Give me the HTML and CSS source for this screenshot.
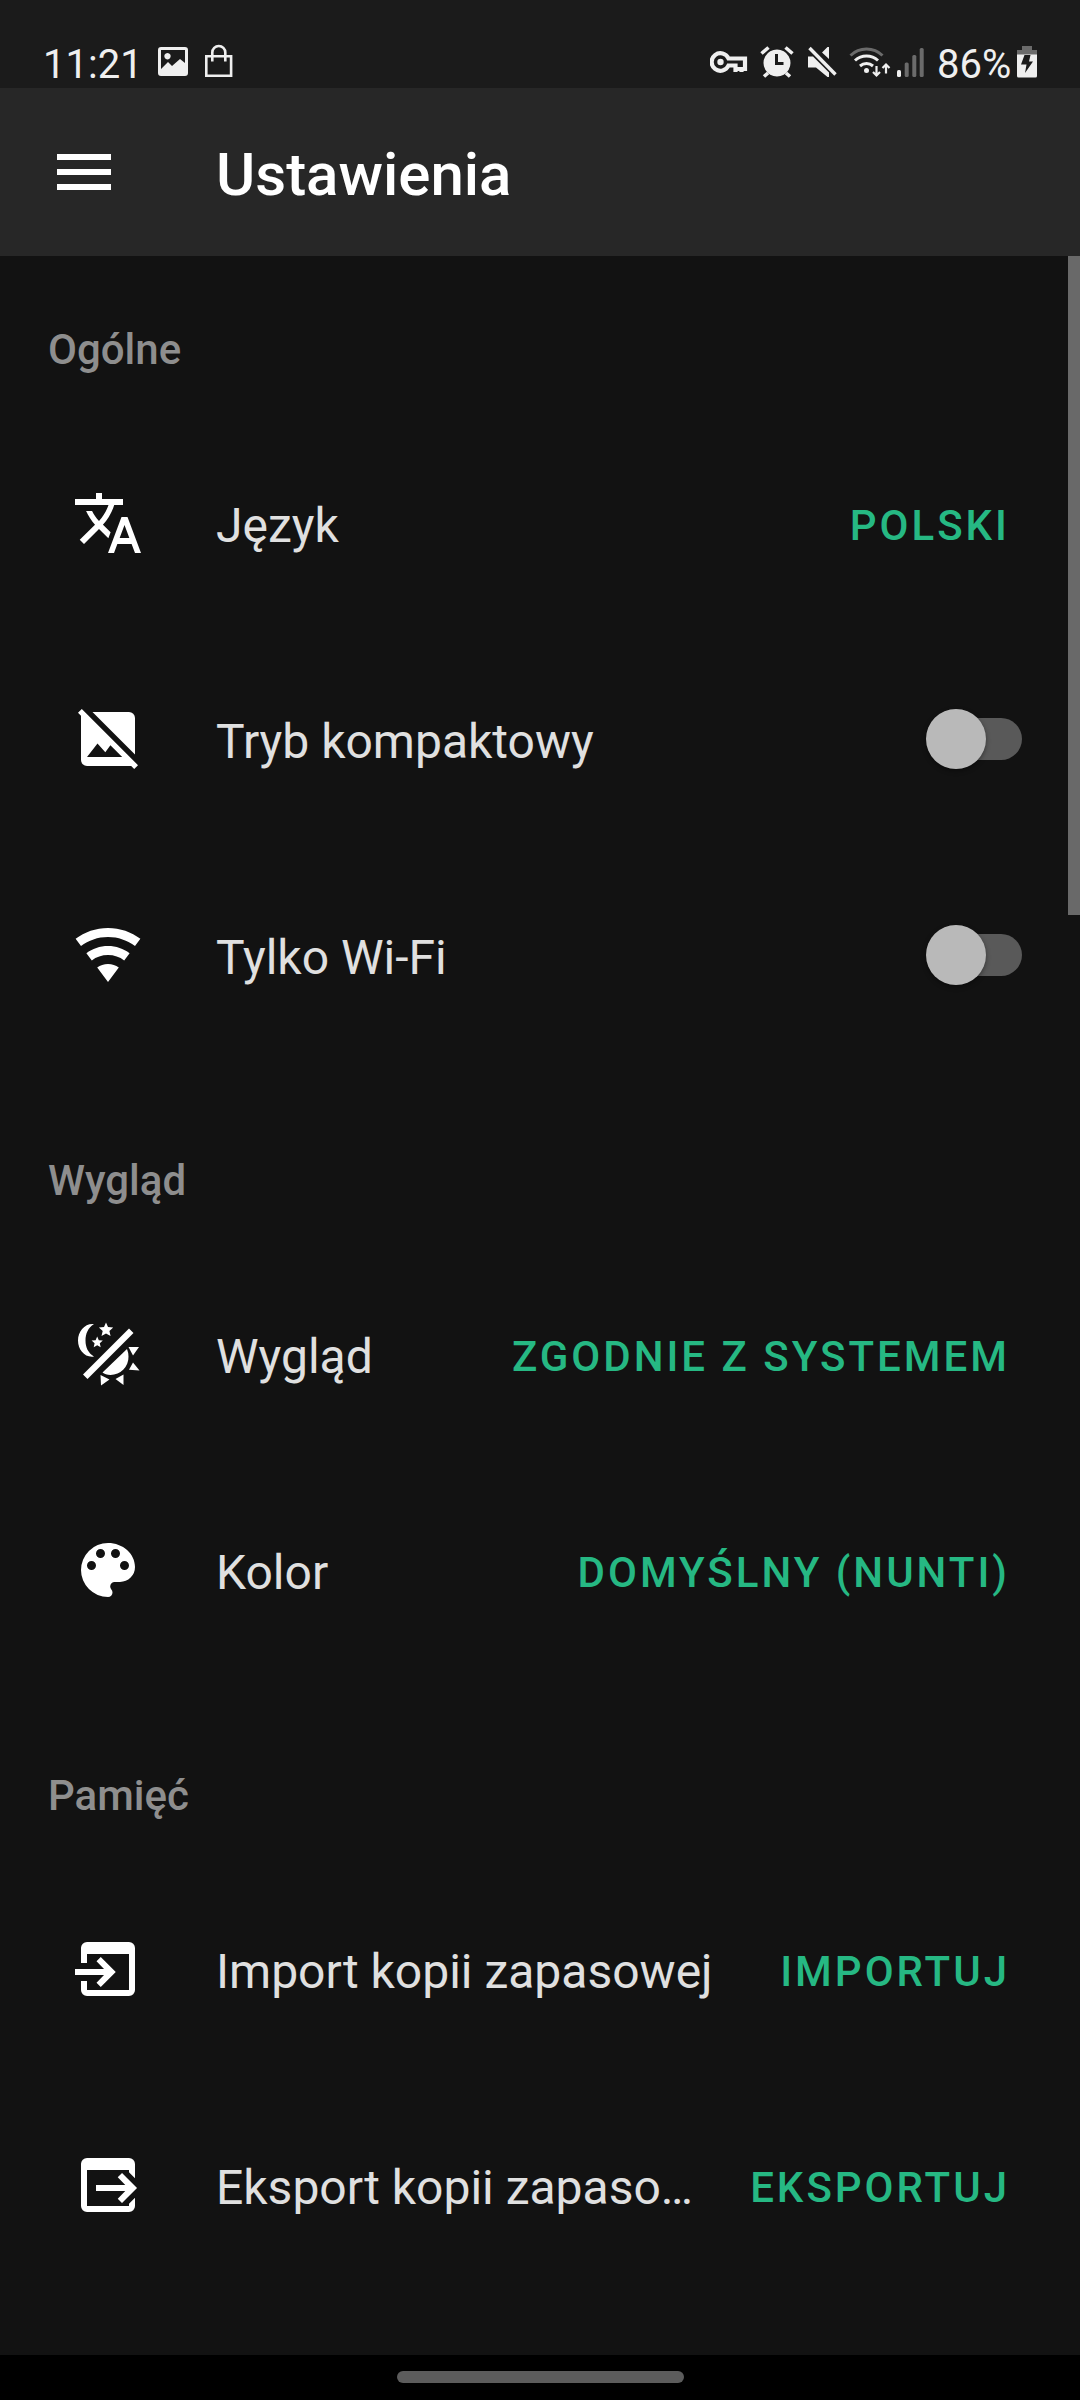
FILE: index.html
```html
<!DOCTYPE html>
<html lang="pl">
<head>
<meta charset="utf-8">
<title>Ustawienia</title>
<link rel="stylesheet" href="styles.css">
</head>
<body>
<div class="screen">
  <div class="status">
    <span class="clock">11:21</span>
    <svg class="st-image" width="30" height="30" viewBox="0 0 30 30"><path fill-rule="evenodd" d="M3 0h24a3 3 0 0 1 3 3v23a3 3 0 0 1-3 3H3a3 3 0 0 1-3-3V3a3 3 0 0 1 3-3zM3 3v19l7-7 4 4 8-7 5 4V3zM9.500 6a3.200 3.200 0 1 1-.01 0z"/></svg>
    <svg class="st-bag" width="30" height="34" viewBox="0 0 30 34"><path fill="none" stroke="#efefef" stroke-width="2.600" d="M2.300 12.300h24.800v19.400H2.300zM8.300 17.500V8.500a6.500 6.500 0 0 1 13 0v9"/></svg>
    <span class="gap"></span>
    <svg class="st-key" width="38" height="24" viewBox="0 0 38 24"><path fill="none" stroke="#efefef" stroke-width="4.200" d="M18.500 8.500H35v10.500h-3.500V22v-3h-6v3-6.500h-7A8.800 8.800 0 1 1 18.500 8.500z"/><circle cx="10.500" cy="12" r="3.200"/></svg>
    <svg class="st-alarm" width="34" height="32" viewBox="0 0 34 32"><path fill-rule="evenodd" d="M17 3.500a13.500 13.500 0 1 1-.01 0zM15 8v11h8.500v-3H18V8z"/><path fill="none" stroke="#efefef" stroke-width="3.600" d="M1.500 7.500 8.500 1.500M32.500 7.500l-7-6M8 27l-4 3.500M26 27l4 3.500"/></svg>
    <svg class="st-mute" width="30" height="32" viewBox="0 0 30 32"><path d="M0 10.500h5L21 26.500V31h-1.500L8 21.500H0zM21 1v12l-7-6.500L19.500 1z"/><path fill="none" stroke="#efefef" stroke-width="3.400" d="M1.500 2 27.500 28.500"/></svg>
    <svg class="st-wifi" width="42" height="32" viewBox="0 0 42 32"><g fill="none" stroke="#efefef" stroke-width="3"><path stroke="#6b6b6b" d="M1.500 9.500a23 23 0 0 1 32 0"/><path d="M6 14.500a17 17 0 0 1 23 0M11 20a10 10 0 0 1 13 0"/><path stroke-width="2.200" d="M27.500 20v9M24 26l3.500 3.500L31 26M37 27.500v-9M33.500 22l3.500-3.500 3.500 3.500"/></g><circle cx="17.500" cy="24.500" r="2.500"/></svg>
    <svg class="st-signal" width="27" height="30" viewBox="0 0 27 30"><rect x="0" y="22" width="4" height="7" rx="1.500"/><g fill="#6b6b6b"><rect x="7.700" y="14.500" width="4" height="14.500" rx="1.500"/><rect x="15.300" y="7" width="4" height="22" rx="1.500"/><rect x="22.700" y="0" width="4" height="29" rx="1.500"/></g></svg>
    <span class="percent">86%</span>
    <svg class="st-batt" width="20" height="32" viewBox="0 0 20 32"><path fill="#6b6b6b" d="M5 0h10v4h5v5H0V4h5z"/><path d="M0 8.500h20V30a1.500 1.500 0 0 1-1.500 1.500h-17A1.500 1.500 0 0 1 0 30z"/><path fill="#1b1b1b" d="M7.500 9h6L12 15.500h4L8 27l1.500-8.500H4z"/></svg>
  </div>
  <header class="appbar">
    <svg class="icon" viewBox="0 0 24 24"><path d="M3 6h18v2H3V6m0 5h18v2H3v-2m0 5h18v2H3v-2z"/></svg>
    <h1>Ustawienia</h1>
  </header>
  <main class="list">
    <div class="scrollbar"></div>
    <h2>Ogólne</h2>
    <div class="row">
      <svg class="icon" viewBox="0 0 24 24"><path d="M12.870 15.070l-2.540-2.510.03-.03A17.520 17.520 0 0 0 14.070 6H17V4h-7V2H8v2H1v2h11.170C11.500 7.920 10.440 9.750 9 11.350 8.070 10.320 7.300 9.190 6.690 8h-2c.73 1.630 1.730 3.170 2.980 4.560l-5.090 5.020L4 19l5-5 3.110 3.110.76-2.040M18.500 10h-2L12 22h2l1.120-3h4.750L21 22h2l-4.500-12m-2.620 7l1.620-4.330L19.120 17h-3.240z"/></svg>
      <span class="label">Język</span><button>Polski</button>
    </div>
    <div class="row">
      <svg class="icon" viewBox="0 0 24 24"><path fill-rule="evenodd" d="M22 20.730L3.270 2 2 3.270l1 1V19a2 2 0 0 0 2 2h14.730l1 1L22 20.730zM6.830 3L21 17.170V5a2 2 0 0 0-2-2H6.830zM5 18l3.500-4.500 2.600 2.900 1.700-2.330L16.730 18H5z"/></svg>
      <span class="label">Tryb kompaktowy</span><span class="switch"></span>
    </div>
    <div class="row">
      <svg class="icon" viewBox="0 0 24 24"><path d="M12 21l3.600-4.800c-1-.75-2.250-1.200-3.600-1.200s-2.600.45-3.600 1.200L12 21m0-18C7.950 3 4.210 4.340 1.200 6.600L3 9c2.500-1.880 5.620-3 9-3s6.500 1.120 9 3l1.800-2.400C19.790 4.340 16.050 3 12 3m0 6c-2.700 0-5.190.89-7.200 2.400l1.800 2.400c1.500-1.130 3.370-1.800 5.400-1.800s3.900.67 5.400 1.800l1.800-2.400C17.190 9.890 14.700 9 12 9z"/></svg>
      <span class="label">Tylko Wi-Fi</span><span class="switch"></span>
    </div>
    <h2>Wygląd</h2>
    <div class="row">
      <svg class="icon" viewBox="0 -2 72 72"><path d="M22 4C13 3 6 11 6 20.500S13 38 22 36.500C16 33 13.500 27 13.500 20.500S16 7.500 22 4zM34 2.500l2 4.500 5.200.4-3.800 3.600 1.200 5-4.600-2.500-4.500 2.500 1.200-5-3.800-3.600 5.100-.4zM25.200 16.500l1.600 3.700 4 .3-3 2.800.9 4-3.500-2-3.500 2 .9-4-3-2.800 4-.3zM57 8.500l4.500 4.500L15.500 59 11 54.500zM55 29a20 20 0 0 1 1.500 7.500A18 18 0 0 1 38.500 55c-3.500 0-6-1-8-2.500zM56.500 27h10.500l-6 8.500zM61 42.500l6.500 8L57 49.800zM28.500 55l9 4.500-8.500 6zM51.500 54.500v10.500l-8-6z"/></svg>
      <span class="label">Wygląd</span><button>Zgodnie z systemem</button>
    </div>
    <div class="row">
      <svg class="icon" viewBox="0 0 24 24"><path d="M17.500 12a1.500 1.500 0 0 1-1.500-1.500A1.500 1.500 0 0 1 17.500 9a1.500 1.500 0 0 1 1.500 1.500 1.500 1.500 0 0 1-1.500 1.500m-3-4A1.500 1.500 0 0 1 13 6.500 1.500 1.500 0 0 1 14.500 5 1.500 1.500 0 0 1 16 6.500 1.500 1.500 0 0 1 14.500 8m-5 0A1.500 1.500 0 0 1 8 6.500 1.500 1.500 0 0 1 9.500 5 1.500 1.500 0 0 1 11 6.500 1.500 1.500 0 0 1 9.500 8m-3 4A1.500 1.500 0 0 1 5 10.500 1.500 1.500 0 0 1 6.500 9 1.500 1.500 0 0 1 8 10.500 1.500 1.500 0 0 1 6.500 12M12 3a9 9 0 0 0-9 9 9 9 0 0 0 9 9 1.500 1.500 0 0 0 1.500-1.500c0-.39-.15-.74-.39-1-.23-.27-.38-.62-.38-1a1.500 1.500 0 0 1 1.500-1.500H16a5 5 0 0 0 5-5c0-4.420-4.030-8-9-8z"/></svg>
      <span class="label">Kolor</span><button>Domyślny (Nunti)</button>
    </div>
    <h2>Pamięć</h2>
    <div class="row">
      <svg class="icon" viewBox="0 0 24 24"><path d="M5 3h14a2 2 0 0 1 2 2v14a2 2 0 0 1-2 2H5a2 2 0 0 1-2-2v-3h2v3h14V7H5v3H3V5a2 2 0 0 1 2-2zM1 12v2h9.670l-2.500 2.590L9.590 18l5-5-5-5-1.420 1.410L10.670 12z"/></svg>
      <span class="label">Import kopii zapasowej</span><button>Importuj</button>
    </div>
    <div class="row">
      <svg class="icon" viewBox="0 0 24 24"><path d="M5 3h14a2 2 0 0 1 2 2v4.750l-2-2V7H5v12h14v-.75l2-2V19a2 2 0 0 1-2 2H5a2 2 0 0 1-2-2V5a2 2 0 0 1 2-2zM8 12v2h9.750l-2.500 2.590L16.670 18l5-5-5-5-1.420 1.410L17.750 12z"/></svg>
      <span class="label">Eksport kopii zapaso…</span><button>Eksportuj</button>
    </div>
  </main>
  <div class="navbar"><span class="pill"></span></div>
</div>
</body>
</html>
```
FILE: styles.css
```css
* { box-sizing: border-box; }
body { margin: 0; background: #121212; font-family: Roboto, sans-serif; color: #e0e0e0; }
.screen { width: 1080px; height: 2400px; display: flex; flex-direction: column; overflow: hidden; }
svg { display: block; flex: none; fill: #efefef; }
.status { height: 88px; background: #1b1b1b; display: flex; align-items: flex-start; padding: 0 43px; color: #efefef; flex: none; }
.clock, .percent { font-size: 40px; line-height: 48px; margin-top: 41px; white-space: nowrap; }
.clock { width: 115px; }
.percent { width: 80px; }
.gap { flex: 1; }
.st-image { margin-top: 47px; }
.st-bag { margin: 44px 0 0 16px; }
.st-key { margin: 50px 12px 0 0; }
.st-alarm { margin: 46px 14px 0 0; }
.st-mute { margin: 46px 11px 0 0; }
.st-wifi { margin: 46px 6px 0 0; }
.st-signal { margin: 48px 13px 0 0; }
.st-batt { margin-top: 46px; }
.appbar { height: 168px; background: #272727; display: flex; align-items: center; padding-left: 48px; gap: 96px; flex: none; }
.icon { width: 72px; height: 72px; fill: #fff; }
h1 { margin: 0; font-size: 60px; font-weight: 500; color: #fff; line-height: 80px; padding-top: 6px; }
.list { flex: 1; position: relative; min-height: 0; }
h2 { margin: 0; font-size: 42px; font-weight: 500; line-height: 66px; padding: 61px 48px 0; height: 159px; color: #8e8e8e; }
.row { height: 216px; display: flex; align-items: center; padding: 0 58px 0 72px; }
.row + h2 { height: 183px; padding-top: 85px; }
.label { flex: 1; min-width: 0; margin-left: 72px; padding-top: 5px; font-size: 48px; line-height: 64px; overflow: hidden; text-overflow: ellipsis; white-space: nowrap; }
button { border: 0; background: none; padding: 6px 12px 0 36px; font: 500 42px/64px Roboto, sans-serif; letter-spacing: 3px; text-transform: uppercase; color: #26b883; white-space: nowrap; }
.switch { width: 90px; height: 42px; border-radius: 21px; background: #595959; position: relative; }
.switch::before { content: ""; position: absolute; left: -6px; top: -9px; width: 60px; height: 60px; border-radius: 50%; background: #b9b9b9; box-shadow: 0 2px 5px rgba(0,0,0,.4); }
.scrollbar { position: absolute; right: 0; top: 0; width: 12px; height: 659px; background: #696969; }
.navbar { height: 45px; background: #000; display: flex; justify-content: center; padding-top: 16px; flex: none; }
.pill { width: 287px; height: 12px; border-radius: 6px; background: #5c5c5c; }
```
